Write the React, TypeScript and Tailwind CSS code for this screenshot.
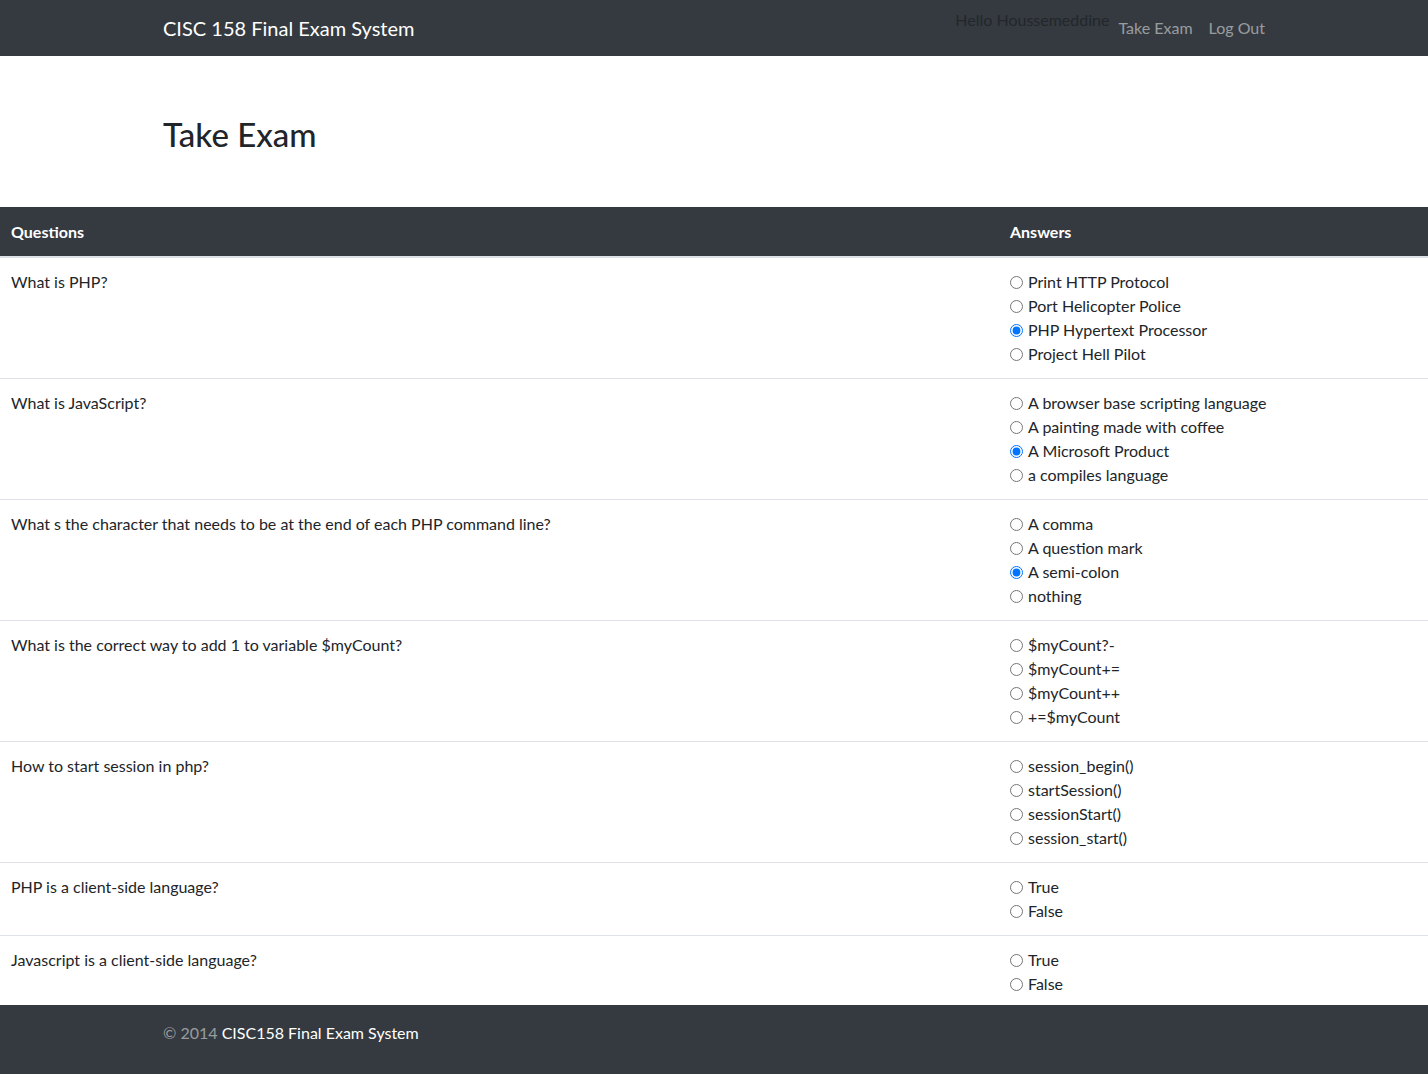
import React from "react";

type Q = { q: string; a: string[]; checked?: number };

const questions: Q[] = [
  { q: "What is PHP?", a: ["Print HTTP Protocol", "Port Helicopter Police", "PHP Hypertext Processor", "Project Hell Pilot"], checked: 2 },
  { q: "What is JavaScript?", a: ["A browser base scripting language", "A painting made with coffee", "A Microsoft Product", "a compiles language"], checked: 2 },
  { q: "What s the character that needs to be at the end of each PHP command line?", a: ["A comma", "A question mark", "A semi-colon", "nothing"], checked: 2 },
  { q: "What is the correct way to add 1 to variable $myCount?", a: ["$myCount?-", "$myCount+=", "$myCount++", "+=$myCount"] },
  { q: "How to start session in php?", a: ["session_begin()", "startSession()", "sessionStart()", "session_start()"] },
  { q: "PHP is a client-side language?", a: ["True", "False"] },
  { q: "Javascript is a client-side language?", a: ["True", "False"] },
];

export default function App() {
  const last = questions.length - 1;
  return (
    <div className="min-h-[1074px] bg-white text-[#212529] text-[16px] leading-6" style={{ fontFamily: "Lato, 'Open Sans', sans-serif" }}>
      <nav className="h-[56px] bg-[#343a40]">
        <div className="mx-auto flex h-full w-[1140px] items-center px-[15px]">
          <div className="pl-[4px] text-[20px] text-white">CISC 158 Final Exam System</div>
          <div className="ml-auto flex h-full items-start pr-[4px]">
            <span className="mt-[8px] text-[#23272b]">Hello Houssemeddine</span>
            <span className="mt-[16px] ml-[9px] text-[rgba(255,255,255,0.5)]">Take Exam</span>
            <span className="mt-[16px] ml-[16px] text-[rgba(255,255,255,0.5)]">Log Out</span>
          </div>
        </div>
      </nav>
      <div className="mx-auto w-[1140px] px-[15px] pt-[58px] pb-[53px]">
        <h1 className="pl-[4px] text-[33px] leading-[40px] font-medium">Take Exam</h1>
      </div>
      <table className="w-full border-collapse">
        <thead>
          <tr className="bg-[#343a40] text-white">
            <th className="w-[998px] border-b-2 border-[#dee2e6] px-[11px] pt-[13px] pb-[12px] text-left font-bold">Questions</th>
            <th className="border-b-2 border-[#dee2e6] px-[12px] pt-[13px] pb-[12px] text-left font-bold">Answers</th>
          </tr>
        </thead>
        <tbody>
          {questions.map((item, i) => (
            <tr key={i} className={i > 0 ? "border-t border-[#dee2e6]" : ""}>
              <td className={"px-[11px] pt-[12px] align-top " + (i === last ? "pb-[9px]" : "pb-[12px]")}>{item.q}</td>
              <td className={"px-[12px] pt-[12px] align-top " + (i === last ? "pb-[9px]" : "pb-[12px]")}>
                {item.a.map((ans, j) => (
                  <label key={j} className="flex h-6 items-center">
                    <input
                      type="radio"
                      name={"q" + i}
                      defaultChecked={item.checked === j}
                      className="m-0 mr-[5px] h-[13px] w-[13px]"
                    />
                    <span>{ans}</span>
                  </label>
                ))}
              </td>
            </tr>
          ))}
        </tbody>
      </table>
      <footer className="h-[69px] bg-[#343a40]">
        <div className="mx-auto w-[1140px] px-[15px] pt-[16px]">
          <span className="pl-[4px] text-[rgba(255,255,255,0.5)]">© 2014 </span>
          <span className="text-white">CISC158 Final Exam System</span>
        </div>
      </footer>
    </div>
  );
}
